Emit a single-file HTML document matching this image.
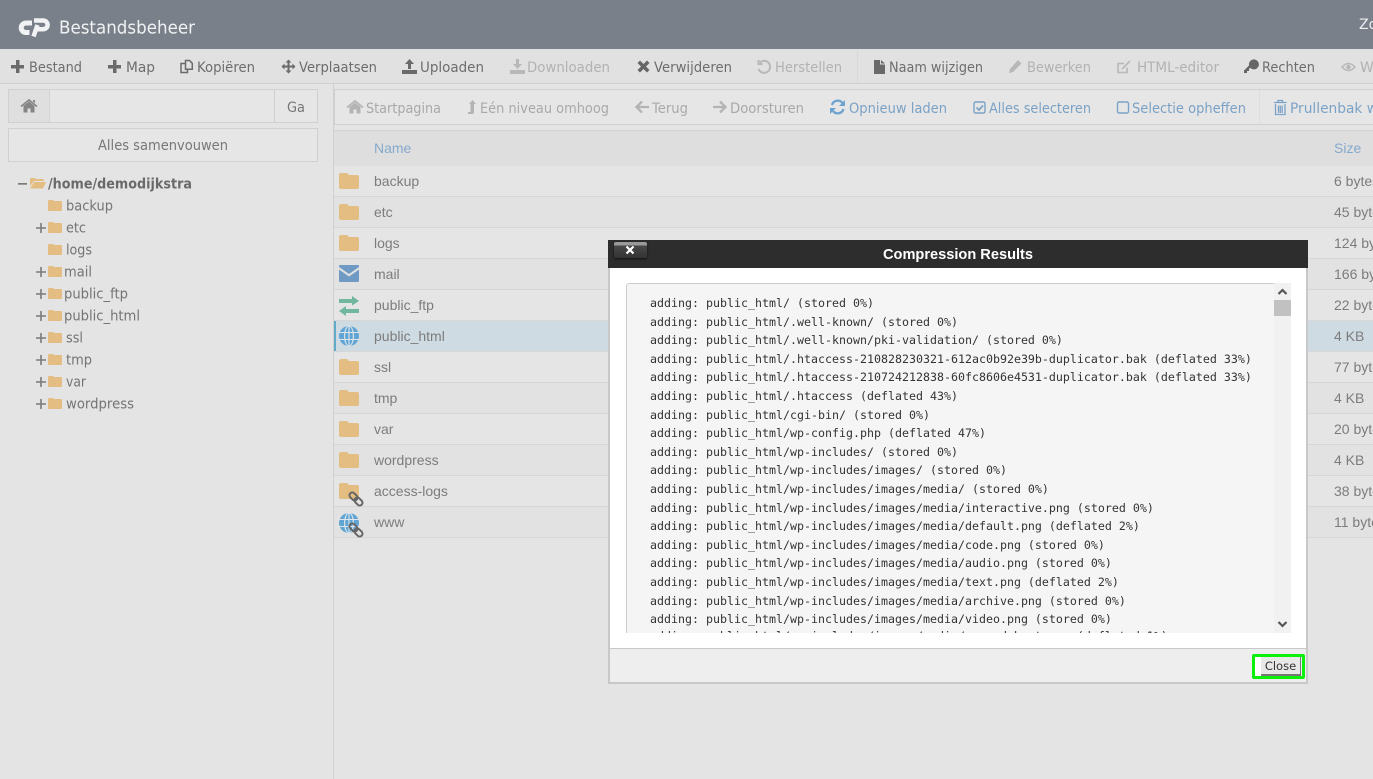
<!DOCTYPE html>
<html lang="nl"><head><meta charset="utf-8"><title>Bestandsbeheer</title>
<style>
html,body{margin:0;padding:0;width:1373px;height:779px;overflow:hidden;background:#e4e4e4}
.b{position:absolute}
svg{position:absolute;left:0;top:0}
.u text{font-family:"DejaVu Sans","Liberation Sans",sans-serif;font-size:14px;fill:#6d6d6d}
.u .d{fill:#b2b2b2}
.u .l{fill:#7ba2c6}
.u .g{fill:#a9a9a9}
.u .t{fill:#747474}
.f text{font-family:"Liberation Sans",Arial,sans-serif;font-size:14px;fill:#7c7c7c}
.f .h{fill:#85a9cc}
pre{position:absolute;margin:0;left:23px;top:10px;font:11.63px/18.6px "DejaVu Sans Mono","Liberation Mono",monospace;color:#333}
pre span{position:relative;top:-2px}
</style></head><body>
<div class="b" style="left:0;top:0;width:1373px;height:49px;background:#79808a"></div>
<div class="b" style="left:0;top:49px;width:1373px;height:34px;background:#e1e1e1;border-bottom:1px solid #cfcfcf"></div>
<div class="b" style="left:857px;top:50px;width:1px;height:33px;background:#d8d8d8"></div>
<div class="b" style="left:333px;top:84px;width:1px;height:695px;background:#d0d0d0"></div>
<div class="b" style="left:8px;top:89px;width:308px;height:32px;border:1px solid #d0d0d0;background:#e6e6e6"></div>
<div class="b" style="left:9px;top:90px;width:40px;height:32px;background:#dfdfdf;border-right:1px solid #d3d3d3"></div>
<div class="b" style="left:274px;top:90px;width:1px;height:32px;background:#d0d0d0"></div>
<div class="b" style="left:8px;top:128px;width:308px;height:32px;border:1px solid #d0d0d0;background:#e6e6e6"></div>
<div class="b" style="left:334px;top:89px;width:1039px;height:34px;border:1px solid #d0d0d0;border-right:0;background:#e6e6e6"></div>
<div class="b" style="left:1259px;top:90px;width:1px;height:34px;background:#dedede"></div>
<div class="b" style="left:334px;top:130px;width:1039px;height:35px;background:#dedede;border-top:1px solid #d2d2d2;border-bottom:1px solid #d0d0d0;box-sizing:content-box"></div>
<div class="b" style="left:334px;top:166px;width:1039px;height:372px;background:repeating-linear-gradient(#e5e5e5 0,#e5e5e5 30px,#d6d6d6 30px,#d6d6d6 31px,#e2e2e2 31px,#e2e2e2 61px,#d6d6d6 61px,#d6d6d6 62px)"></div>
<div class="b" style="left:334px;top:321px;width:1039px;height:30px;background:#cfdbe3;border-left:2px solid #62aacb;box-sizing:border-box"></div>

<svg class="u" width="1373" height="779" viewBox="0 0 1373 779" xmlns="http://www.w3.org/2000/svg">
<defs>
<path id="fo" d="M0 2q0-2 2-2h6l2 2h8q2 0 2 2v10q0 2-2 2H2q-2 0-2-2z" fill="#e3bd82"/>
<path id="fs" d="M0 1q0-1 1-1h4l1 1h7q1 0 1 1v8q0 1-1 1H1q-1 0-1-1z" fill="#e3bd82"/>
<path id="pl" d="M4.200 0h1.600v4.200H10v1.600H5.800V10H4.200V5.800H0V4.200h4.200z" fill="#7a7a7a"/>
<g id="gl"><circle cx="10" cy="10" r="10" fill="#60a4d4"/><g fill="none" stroke="#dfe6ea" stroke-width="1.100"><ellipse cx="10" cy="10" rx="4.400" ry="10"/><path d="M0 6.500h20M0 13.500h20M10 0v20"/></g></g>
<g id="ln" fill="none" stroke="#656565" stroke-width="2"><rect x="-4.500" y="-2.800" width="9" height="5.600" rx="2.800" transform="translate(4.500 4.500) rotate(45)"/><rect x="-4.500" y="-2.800" width="9" height="5.600" rx="2.800" transform="translate(9.500 9.500) rotate(45)"/></g>
</defs>

<!-- logo -->
<g fill="none" stroke="#f1f2f3" stroke-linejoin="round"><path stroke-width="5" d="M32 23h-5.500a4.700 4.700 0 0 0-1 9.500h4"/><path stroke-width="4.500" d="M34 20.500h9.500a4.300 4.300 0 0 1-.5 8.700h-5.500"/><path stroke-width="4.500" d="M37.500 25L33.500 36.500"/></g>
<text x="59" y="33.500" textLength="136" lengthAdjust="spacingAndGlyphs" style="font-size:18px;fill:#f0f1f2">Bestandsbeheer</text>
<text x="1359" y="29" style="fill:#eceded;font-size:14px">Zo</text>

<!-- toolbar 1 -->
<g transform="translate(11 60)"><path fill="#6a6a6a" d="M5 0h3.500v5H13v3.500H8.500V13H5V8.500H0V5h5z"/></g>
<text x="29" y="72" textLength="53" lengthAdjust="spacingAndGlyphs">Bestand</text>
<g transform="translate(108 60)"><path fill="#6a6a6a" d="M5 0h3.500v5H13v3.500H8.500V13H5V8.500H0V5h5z"/></g>
<text x="126" y="72" textLength="29" lengthAdjust="spacingAndGlyphs">Map</text>
<path fill="none" stroke="#6a6a6a" stroke-width="1.500" d="M185 63.500h-4v9h6.500v-3M185.500 60.500h4l2.800 2.800v6h-6.800z"/>
<text x="197" y="72" textLength="58" lengthAdjust="spacingAndGlyphs">Kopiëren</text>
<path fill="#6a6a6a" d="M288.500 59.500l3 3h-2v3h3v-2l3 3-3 3v-2h-3v3h2l-3 3-3-3h2v-3h-3v2l-3-3 3-3v2h3v-3h-2z"/>
<text x="299" y="72" textLength="78" lengthAdjust="spacingAndGlyphs">Verplaatsen</text>
<path fill="#6a6a6a" d="M409.500 59l4.500 5h-3v5h-3v-5h-3zM402 70h15v4h-15z"/>
<text x="420" y="72" textLength="64" lengthAdjust="spacingAndGlyphs">Uploaden</text>
<path fill="#b8b8b8" d="M516 59h3v5h3l-4.500 5-4.500-5h3zM510 70h15v4h-15z"/>
<text class="d" x="527" y="72" textLength="83" lengthAdjust="spacingAndGlyphs">Downloaden</text>
<path fill="#666" d="M640 60.500l3.500 3.500 3.500-3.500 2.500 2.500-3.500 3.500 3.500 3.500-2.500 2.500-3.500-3.500-3.500 3.500-2.500-2.500 3.500-3.500-3.500-3.500z"/>
<text x="654" y="72" textLength="78" lengthAdjust="spacingAndGlyphs">Verwijderen</text>
<path fill="none" stroke="#b8b8b8" stroke-width="2" d="M760 62.500a6 6 0 1 1-1.500 6.500M758.500 60v4h4"/>
<text class="d" x="775" y="72" textLength="67" lengthAdjust="spacingAndGlyphs">Herstellen</text>
<path fill="#6a6a6a" d="M874 60h6v4.500h5V74h-11zM881 60l4 3.500h-4z"/>
<text x="889" y="72" textLength="94" lengthAdjust="spacingAndGlyphs">Naam wijzigen</text>
<path fill="#b8b8b8" d="M1018 60l3.500 3.500-8.500 8.500-4 1 1-4z"/>
<text class="d" x="1027" y="72" textLength="64" lengthAdjust="spacingAndGlyphs">Bewerken</text>
<path fill="none" stroke="#b8b8b8" stroke-width="1.600" d="M1127 67.500v5h-9v-9h6M1122 69l8-8"/>
<text class="d" x="1137" y="72" textLength="82" lengthAdjust="spacingAndGlyphs">HTML-editor</text>
<path fill="#666" d="M1253 59.500a5 5 0 1 1-2.800 8.300L1249 69v2h-2v2h-3v-2.500l5-5a5 5 0 0 1 4-6z"/>
<text x="1262" y="72" textLength="53" lengthAdjust="spacingAndGlyphs">Rechten</text>
<path fill="none" stroke="#b8b8b8" stroke-width="1.600" d="M1342 67q6.500-7 13 0q-6.500 7-13 0z"/><circle cx="1348.500" cy="67" r="2.300" fill="#b8b8b8"/>
<text class="d" x="1360" y="72">W</text>

<!-- path -->
<path fill="none" stroke="#858585" stroke-width="1.700" d="M21 106.500l8-6.500 8 6.500"/><path fill="#858585" d="M23.500 106l5.500-4.500 5.500 4.500v6.500h-4v-4h-3v4h-4zM33 100h2v3l-2-1.500z"/>
<text x="287" y="112" textLength="18" lengthAdjust="spacingAndGlyphs" style="fill:#777">Ga</text>
<text x="98" y="150" textLength="130" lengthAdjust="spacingAndGlyphs" style="fill:#777">Alles samenvouwen</text>

<!-- toolbar 2 -->
<path fill="none" stroke="#b4b4b4" stroke-width="1.700" d="M347 107.500l8-6.500 8 6.500"/><path fill="#b4b4b4" d="M349.500 107l5.500-4.500 5.500 4.500v6.500h-4v-4h-3v4h-4z"/>
<text class="g" x="366" y="113" textLength="75" lengthAdjust="spacingAndGlyphs">Startpagina</text>
<path fill="#b4b4b4" d="M472.500 100l3.500 4h-2v8q0 2-2 2h-4v-2h2.500v-8h-1.500z"/>
<text class="g" x="480" y="113" textLength="129" lengthAdjust="spacingAndGlyphs">Eén niveau omhoog</text>
<path fill="none" stroke="#b4b4b4" stroke-width="2.300" d="M649 107h-12M642 101.500l-5.500 5.500 5.500 5.500"/>
<text class="g" x="652" y="113" textLength="36" lengthAdjust="spacingAndGlyphs">Terug</text>
<path fill="none" stroke="#b4b4b4" stroke-width="2.300" d="M713 107h12M720 101.500l5.500 5.500-5.500 5.500"/>
<text class="g" x="730" y="113" textLength="74" lengthAdjust="spacingAndGlyphs">Doorsturen</text>
<path fill="none" stroke="#6ea3cf" stroke-width="2.300" d="M832 105a6 6 0 0 1 10.500-2M843.500 109a6 6 0 0 1-10.500 2"/><path fill="#6ea3cf" d="M845 100v6h-6zM830 114v-6h6z"/>
<text class="l" x="849" y="113" textLength="98" lengthAdjust="spacingAndGlyphs">Opnieuw laden</text>
<rect x="974" y="102" width="11" height="11" rx="1.500" fill="none" stroke="#7ba2c6" stroke-width="1.400"/><path fill="none" stroke="#7ba2c6" stroke-width="1.700" d="M976.500 107.500l2.500 2.500 4-4.500"/>
<text class="l" x="989" y="113" textLength="102" lengthAdjust="spacingAndGlyphs">Alles selecteren</text>
<rect x="1117.500" y="102" width="11" height="11" rx="1.500" fill="none" stroke="#7ba2c6" stroke-width="1.400"/>
<text class="l" x="1132" y="113" textLength="114" lengthAdjust="spacingAndGlyphs">Selectie opheffen</text>
<path fill="none" stroke="#7ba2c6" stroke-width="1.300" d="M1275.500 104v10.500h9.500V104M1278.500 105.500v7.500M1280.300 105.500v7.500M1282.200 105.500v7.500M1274 102.500h12.500M1278 102.500v-2h4.500v2"/>
<text class="l" x="1290" y="113" textLength="88" lengthAdjust="spacingAndGlyphs">Prullenbak w</text>

<!-- tree -->
<path fill="#7a7a7a" d="M18 183h9v1.700h-9z"/>
<path fill="#e3bd82" d="M30 179q0-1 1-1h4l1 1h7q1 0 1 1v1H34l-4 5z"/><path fill="#e3bd82" d="M34 182h12l-3 6.500H30z"/>
<text x="48" y="188.500" textLength="144" lengthAdjust="spacingAndGlyphs" style="font-weight:bold;fill:#6a6a6a">/home/demodijkstra</text>
<use href="#fs" x="48" y="200"/><text class="t" x="66" y="210.500" textLength="47" lengthAdjust="spacingAndGlyphs">backup</text>
<use href="#pl" x="36" y="223"/><use href="#fs" x="48" y="222"/><text class="t" x="66" y="232.500" textLength="20" lengthAdjust="spacingAndGlyphs">etc</text>
<use href="#fs" x="48" y="244"/><text class="t" x="66" y="254.500" textLength="26" lengthAdjust="spacingAndGlyphs">logs</text>
<use href="#pl" x="36" y="267"/><use href="#fs" x="48" y="266"/><text class="t" x="64" y="276.500" textLength="28" lengthAdjust="spacingAndGlyphs">mail</text>
<use href="#pl" x="36" y="289"/><use href="#fs" x="48" y="288"/><text class="t" x="64" y="298.500" textLength="64" lengthAdjust="spacingAndGlyphs">public_ftp</text>
<use href="#pl" x="36" y="311"/><use href="#fs" x="48" y="310"/><text class="t" x="64" y="320.500" textLength="76" lengthAdjust="spacingAndGlyphs">public_html</text>
<use href="#pl" x="36" y="333"/><use href="#fs" x="48" y="332"/><text class="t" x="66" y="342.500" textLength="17" lengthAdjust="spacingAndGlyphs">ssl</text>
<use href="#pl" x="36" y="355"/><use href="#fs" x="48" y="354"/><text class="t" x="66" y="364.500" textLength="26" lengthAdjust="spacingAndGlyphs">tmp</text>
<use href="#pl" x="36" y="377"/><use href="#fs" x="48" y="376"/><text class="t" x="66" y="386.500" textLength="20" lengthAdjust="spacingAndGlyphs">var</text>
<use href="#pl" x="36" y="399"/><use href="#fs" x="48" y="398"/><text class="t" x="66" y="408.500" textLength="68" lengthAdjust="spacingAndGlyphs">wordpress</text>

<!-- file icons -->
<use href="#fo" x="339" y="173"/><use href="#fo" x="339" y="204"/><use href="#fo" x="339" y="235"/>
<path fill="#6f9ac4" d="M339 266q0-1 1-1h18q1 0 1 1v1l-10 7-10-7zM339 269.500l10 7 10-7V281q0 1-1 1h-18q-1 0-1-1z"/>
<path fill="#70b79d" d="M339 299h13v-3l7 5-7 4.500V303h-13zM359 309v4h-13v3l-7-5 7-5v3z"/>
<use href="#gl" x="339" y="326"/>
<use href="#fo" x="339" y="359"/><use href="#fo" x="339" y="390"/><use href="#fo" x="339" y="421"/><use href="#fo" x="339" y="452"/><use href="#fo" x="339" y="483"/>
<use href="#ln" x="349" y="492"/>
<use href="#gl" x="339" y="513"/>
<use href="#ln" x="349" y="523"/>

<g class="f">
<text class="h" x="374" y="153">Name</text><text class="h" x="1334" y="153">Size</text>
<text x="374" y="186">backup</text><text x="1334" y="186">6 bytes</text>
<text x="374" y="217">etc</text><text x="1334" y="217">45 bytes</text>
<text x="374" y="248">logs</text><text x="1334" y="248">124 bytes</text>
<text x="374" y="279">mail</text><text x="1334" y="279">166 bytes</text>
<text x="374" y="310">public_ftp</text><text x="1334" y="310">22 bytes</text>
<text x="374" y="341">public_html</text><text x="1334" y="341">4 KB</text>
<text x="374" y="372">ssl</text><text x="1334" y="372">77 bytes</text>
<text x="374" y="403">tmp</text><text x="1334" y="403">4 KB</text>
<text x="374" y="434">var</text><text x="1334" y="434">20 bytes</text>
<text x="374" y="465">wordpress</text><text x="1334" y="465">4 KB</text>
<text x="374" y="496">access-logs</text><text x="1334" y="496">38 bytes</text>
<text x="374" y="527">www</text><text x="1334" y="527">11 bytes</text>
</g>
</svg>

<!-- dialog -->
<div class="b" style="left:608px;top:240px;width:700px;height:444px;background:#fff;border:2px solid #c8c8c8;border-top:0;box-sizing:border-box"></div>
<div class="b" style="left:608px;top:240px;width:700px;height:28px;background:#2d2d2d"></div>
<div class="b" style="left:614px;top:242px;width:33px;height:16px;border-radius:2px;background:linear-gradient(#999 0,#999 3px,#474747 4px,#333 100%);box-shadow:0 1px 2px #111"></div>
<svg style="left:0;top:0" width="1373" height="779" viewBox="0 0 1373 779" xmlns="http://www.w3.org/2000/svg">
<path stroke="#fff" stroke-width="2.200" d="M626.500 246.500l7 7M633.500 246.500l-7 7"/>
<text x="958" y="259" text-anchor="middle" style="font:bold 14.600px 'Liberation Sans',Arial,sans-serif;fill:#fff">Compression Results</text>
</svg>
<div class="b" style="left:626px;top:283px;width:647px;height:349px;background:#f5f5f5;border:1px solid #ccc;border-bottom:0;border-radius:3px 0 0 0;overflow:hidden"><pre>adding: public_html/ (stored 0%)
adding: public_html/.well-known/ (stored 0%)
adding: public_html/.well-known/pki-validation/ (stored 0%)
adding: public_html/.htaccess-210828230321-612ac0b92e39b-duplicator.bak (deflated 33%)
adding: public_html/.htaccess-210724212838-60fc8606e4531-duplicator.bak (deflated 33%)
adding: public_html/.htaccess (deflated 43%)
adding: public_html/cgi-bin/ (stored 0%)
adding: public_html/wp-config.php (deflated 47%)
adding: public_html/wp-includes/ (stored 0%)
adding: public_html/wp-includes/images/ (stored 0%)
adding: public_html/wp-includes/images/media/ (stored 0%)
adding: public_html/wp-includes/images/media/interactive.png (stored 0%)
adding: public_html/wp-includes/images/media/default.png (deflated 2%)
adding: public_html/wp-includes/images/media/code.png (stored 0%)
adding: public_html/wp-includes/images/media/audio.png (stored 0%)
adding: public_html/wp-includes/images/media/text.png (deflated 2%)
adding: public_html/wp-includes/images/media/archive.png (stored 0%)
adding: public_html/wp-includes/images/media/video.png (stored 0%)
<span>adding: public_html/wp-includes/images/media/spreadsheet.png (deflated 1%)</span></pre></div>
<div class="b" style="left:1274px;top:283px;width:17px;height:350px;background:#f1f1f1"></div>
<div class="b" style="left:1274px;top:300px;width:17px;height:16px;background:#c1c1c1"></div>
<div class="b" style="left:610px;top:648px;width:696px;height:34px;background:#eeeeee;border-top:1px solid #c8c8c8;box-sizing:border-box"></div>
<div class="b" style="left:1252px;top:654px;width:53px;height:25px;border:3px solid #0cf00c;box-sizing:border-box;border-radius:2px;background:#f1f1f1"></div>
<div class="b" style="left:1255px;top:657px;width:6px;height:19px;background:#fff"></div>
<div class="b" style="left:1261px;top:657px;width:39px;height:17px;background:#e8e8e8;border-right:1px solid #777;border-bottom:2px solid #777;box-sizing:content-box;font:11.500px/19px 'DejaVu Sans','Liberation Sans',sans-serif;color:#333;text-align:center;overflow:hidden">Close</div>
<svg style="left:0;top:0" width="1373" height="779" viewBox="0 0 1373 779" xmlns="http://www.w3.org/2000/svg">
<path fill="none" stroke="#555" stroke-width="2.200" d="M1278.500 294l4-4 4 4M1278.500 622l4 4 4-4"/>
</svg>
</body></html>
